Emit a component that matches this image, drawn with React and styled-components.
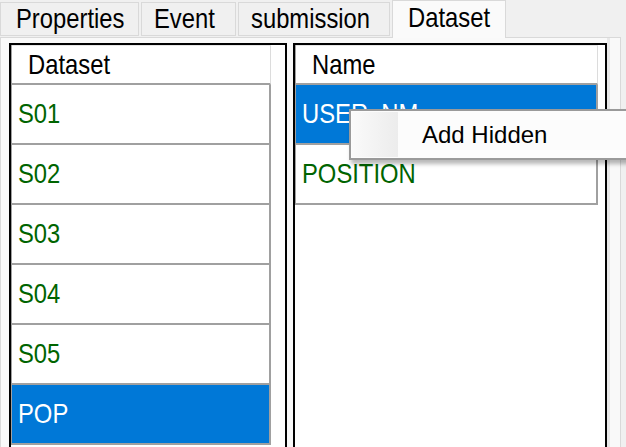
import styled, {createGlobalStyle} from 'styled-components'

const GlobalStyle = createGlobalStyle`
  html, body {
    margin: 0;
    padding: 0;
    background: #f0f0f0;
    overflow: hidden;
  }
`

const gridFont = `"Liberation Sans", Arial, sans-serif`

const Window = styled.div`
  position: relative;
  width: 626px;
  height: 447px;
  overflow: hidden;
  display: flex;
  flex-direction: column;
  background: #f0f0f0;
`

const TabBar = styled.div`
  display: flex;
  align-items: flex-end;
  gap: 2px;
  height: 38px;
  position: relative;
  z-index: 1;
`

const Tab = styled.div`
  box-sizing: border-box;
  width: ${(p) => p.w}px;
  height: ${(p) => (p.active ? 38 : 34)}px;
  margin-bottom: ${(p) => (p.active ? '-1px' : '1px')};
  display: flex;
  align-items: center;
  padding-left: ${(p) => p.pad}px;
  padding-bottom: ${(p) => (p.active ? '4px' : '0')};
  background: ${(p) => (p.active ? '#fafafa' : '#f0f0f0')};
  border: 1px solid #d9d9d9;
  border-bottom: ${(p) => (p.active ? 'none' : '1px solid #d9d9d9')};
  color: #000;
  white-space: nowrap;
`

// narrow bitmap-like face of the original grid: Arial metrics squeezed horizontally
const Label = styled.span`
  display: inline-block;
  font-family: ${gridFont};
  font-size: 28px;
  transform: scaleX(0.85);
  transform-origin: left center;
  white-space: nowrap;
`

const Pane = styled.div`
  flex: 1;
  width: 621px;
  box-sizing: border-box;
  display: flex;
  gap: 6px;
  padding: 5px 0 0 8px;
  background: #f9f9f9;
  border: 1px solid #d9d9d9;
  border-bottom: none;
  box-shadow: inset -10px 0 0 #f9f9f9, inset -13px 0 0 #e8e8e8;
`

const Panel = styled.div`
  box-sizing: border-box;
  width: ${(p) => p.w}px;
  height: 420px;
  border: 2px solid #000;
  background: #fff;
`

const Column = styled.div`
  width: ${(p) => p.w}px;
  border-left: 1px solid #a0a0a0;
`

const Header = styled.div`
  box-sizing: border-box;
  height: 40px;
  display: flex;
  align-items: center;
  padding-left: ${(p) => p.pad}px;
  border-top: 1px solid #e6e6e6;
  border-right: 1px solid #dcdcdc;
  border-bottom: 2px solid #a0a0a0;
  color: #000;
`

const Row = styled.div`
  box-sizing: border-box;
  height: 60px;
  display: flex;
  align-items: center;
  padding-left: 6px;
  border-right: 2px solid #a0a0a0;
  border-bottom: 2px solid #a0a0a0;
  background: ${(p) => (p.selected ? '#0078d7' : '#fff')};
  color: ${(p) => (p.selected ? '#fff' : '#006400')};
  overflow: hidden;
`

const Menu = styled.div`
  position: absolute;
  left: 349px;
  top: 109px;
  width: 300px;
  height: 51px;
  box-sizing: border-box;
  display: flex;
  align-items: center;
  background: #fcfcfc;
  border: 2px solid #9a9a9a;
  box-shadow: 2px 4px 4px rgba(0, 0, 0, 0.28);
  z-index: 2;
`

const MenuIconStrip = styled.div`
  width: 46px;
  height: 45px;
  margin-left: 1px;
  background: linear-gradient(to right, #fafafa, #ececec);
`

const MenuLabel = styled.div`
  margin-left: 24px;
  font-family: "Liberation Sans", Arial, sans-serif;
  font-size: 24px;
  color: #000;
`

const tabs = [
    {label: 'Properties', w: 139, pad: 15},
    {label: 'Event', w: 95, pad: 12},
    {label: 'submission', w: 152, pad: 12},
    {label: 'Dataset', w: 114, pad: 15, active: true},
]
const datasets = ['S01', 'S02', 'S03', 'S04', 'S05', 'POP']
const names = ['USER_NM', 'POSITION']

export default function App() {
    return (
        <Window>
            <GlobalStyle />
            <TabBar>
                {tabs.map((t) => (
                    <Tab key={t.label} w={t.w} pad={t.pad} active={t.active}>
                        <Label>{t.label}</Label>
                    </Tab>
                ))}
            </TabBar>
            <Pane>
                <Panel w={278}>
                    <Column w={259}>
                        <Header pad={16}><Label>Dataset</Label></Header>
                        {datasets.map((d) => (
                            <Row key={d} selected={d === 'POP'}><Label>{d}</Label></Row>
                        ))}
                    </Column>
                </Panel>
                <Panel w={314}>
                    <Column w={302}>
                        <Header pad={16}><Label>Name</Label></Header>
                        {names.map((n, i) => (
                            <Row key={n} selected={i === 0}><Label>{n}</Label></Row>
                        ))}
                    </Column>
                </Panel>
            </Pane>
            <Menu>
                <MenuIconStrip />
                <MenuLabel>Add Hidden</MenuLabel>
            </Menu>
        </Window>
    )
}
